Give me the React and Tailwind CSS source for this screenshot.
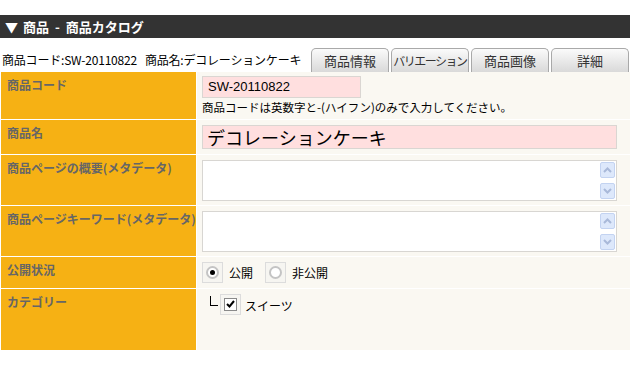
import React from 'react';

const font = { fontFamily: '"MS UI Gothic", "Noto Sans CJK JP", "Liberation Sans", sans-serif' };

function ScrollBtn({ up }) {
  return (
    <div className="w-[15px] h-[16px] rounded-[2px] border border-[#c3d3f1] bg-[#dde8fb] flex items-center justify-center">
      <svg width="9" height="6" viewBox="0 0 9 6">
        <path d={up ? 'M1 5 L4.5 1.5 L8 5' : 'M1 1 L4.5 4.5 L8 1'} fill="none" stroke="#a9b9d9" strokeWidth="2" />
      </svg>
    </div>
  );
}

function TextArea() {
  return (
    <div className="w-[415px] h-[41px] border border-[#d8d6d2] bg-white flex justify-end">
      <div className="w-[17px] h-full flex flex-col justify-between py-[1px] pr-[1px] items-end">
        <ScrollBtn up />
        <ScrollBtn />
      </div>
    </div>
  );
}

function Label({ children }) {
  return (
    <div className="bg-[#f6b114] pl-[6px] pt-[6px] text-[12px] font-bold text-[#666666] leading-[14px] whitespace-nowrap">
      {children}
    </div>
  );
}

function Cell({ children, className = '' }) {
  return <div className={`bg-[#faf8f2] pl-[5px] ${className}`}>{children}</div>;
}

function Radio({ checked, label }) {
  return (
    <div className="flex items-center gap-[6px]">
      <div className="w-[21px] h-[21px] border border-[#dcdcdc] bg-[#f6f5f1] flex items-center justify-center">
        <div className="w-[13px] h-[13px] rounded-full border-2 border-[#c4c4c4] bg-white flex items-center justify-center">
          {checked && <div className="w-[5px] h-[5px] rounded-full bg-black" />}
        </div>
      </div>
      <span className="text-[12px] text-black">{label}</span>
    </div>
  );
}

const tabs = [
  { t: '商品情報', c: 'text-[13px]' },
  { t: 'バリエーション', c: 'text-[12px] tracking-[-1.5px]' },
  { t: '商品画像', c: 'text-[13px]' },
  { t: '詳細', c: 'text-[13px]' },
];

export default function App() {
  return (
    <div className="w-[630px] h-[378px] bg-white overflow-hidden" style={font}>
      <div className="h-[15px]" />
      <div className="h-[23px] bg-[#333333] text-white text-[13px] font-bold flex items-center pl-[5px] leading-none whitespace-pre">
        <span className="mr-[5px]">▼</span>
        <span>商品  -  商品カタログ</span>
      </div>
      <div className="h-[34px] flex items-end">
        <div className="w-[311px] pl-[2px] pb-[5px] text-[12px] text-black whitespace-pre leading-[14px] tracking-[-0.2px]">
          <span>商品コード:SW-20110822</span>
          <span className="ml-[8px]">商品名:デコレーションケーキ</span>
        </div>
        <div className="flex gap-[2px]">
          {tabs.map((x) => (
            <div
              key={x.t}
              className={`w-[78px] h-[24px] rounded-t-[5px] border border-b-0 border-[#a9a9a9] bg-gradient-to-b from-[#fbfbfb] to-[#d9d9d9] text-[#333333] flex items-center justify-center whitespace-nowrap ${x.c}`}
            >
              {x.t}
            </div>
          ))}
        </div>
      </div>
      <div className="grid grid-cols-[195px_433px] gap-px pl-px bg-white">
        <Label>商品コード</Label>
        <Cell className="h-[47px] pt-[4px]">
          <div className="w-[159px] h-[22px] border border-[#dad6d2] bg-[#ffdfdf] pl-[5px] flex items-center text-[13px] text-black" style={{ fontFamily: '"Liberation Sans", sans-serif' }}>
            SW-20110822
          </div>
          <div className="text-[11.5px] text-black mt-[2px] leading-[14px] whitespace-nowrap">
            商品コードは英数字と-(ハイフン)のみで入力してください。
          </div>
        </Cell>

        <Label>商品名</Label>
        <Cell className="h-[34px] pt-[5px]">
          <div className="w-[415px] h-[24px] border border-[#dad6d2] bg-[#ffdfdf] pl-[4px] flex items-center text-[18px] text-black leading-none">
            デコレーションケーキ
          </div>
        </Cell>

        <Label>商品ページの概要(メタデータ)</Label>
        <Cell className="h-[50px] pt-[5px]">
          <TextArea />
        </Cell>

        <Label>商品ページキーワード(メタデータ)</Label>
        <Cell className="h-[50px] pt-[5px]">
          <TextArea />
        </Cell>

        <Label>公開状況</Label>
        <Cell className="h-[31px] flex items-center gap-[12px]">
          <Radio checked label="公開" />
          <Radio label="非公開" />
        </Cell>

        <Label>カテゴリー</Label>
        <Cell className="h-[61px] pt-[4px]">
          <div className="flex items-center pl-[8px]">
            <div className="w-[8px] h-[10px] border-l border-b border-black mr-[2px] -mt-[6px]" />
            <div className="w-[21px] h-[21px] border border-[#dcdcdc] bg-[#f6f5f1] flex items-center justify-center">
              <div className="w-[13px] h-[13px] border border-[#8a8a8a] bg-white flex items-center justify-center">
                <svg width="9" height="8" viewBox="0 0 9 8">
                  <path d="M1 4 L3.5 6.5 L8 1" fill="none" stroke="#000" strokeWidth="2" />
                </svg>
              </div>
            </div>
            <span className="text-[12px] text-black ml-[4px] mt-[4px]">スイーツ</span>
          </div>
        </Cell>
      </div>
    </div>
  );
}
